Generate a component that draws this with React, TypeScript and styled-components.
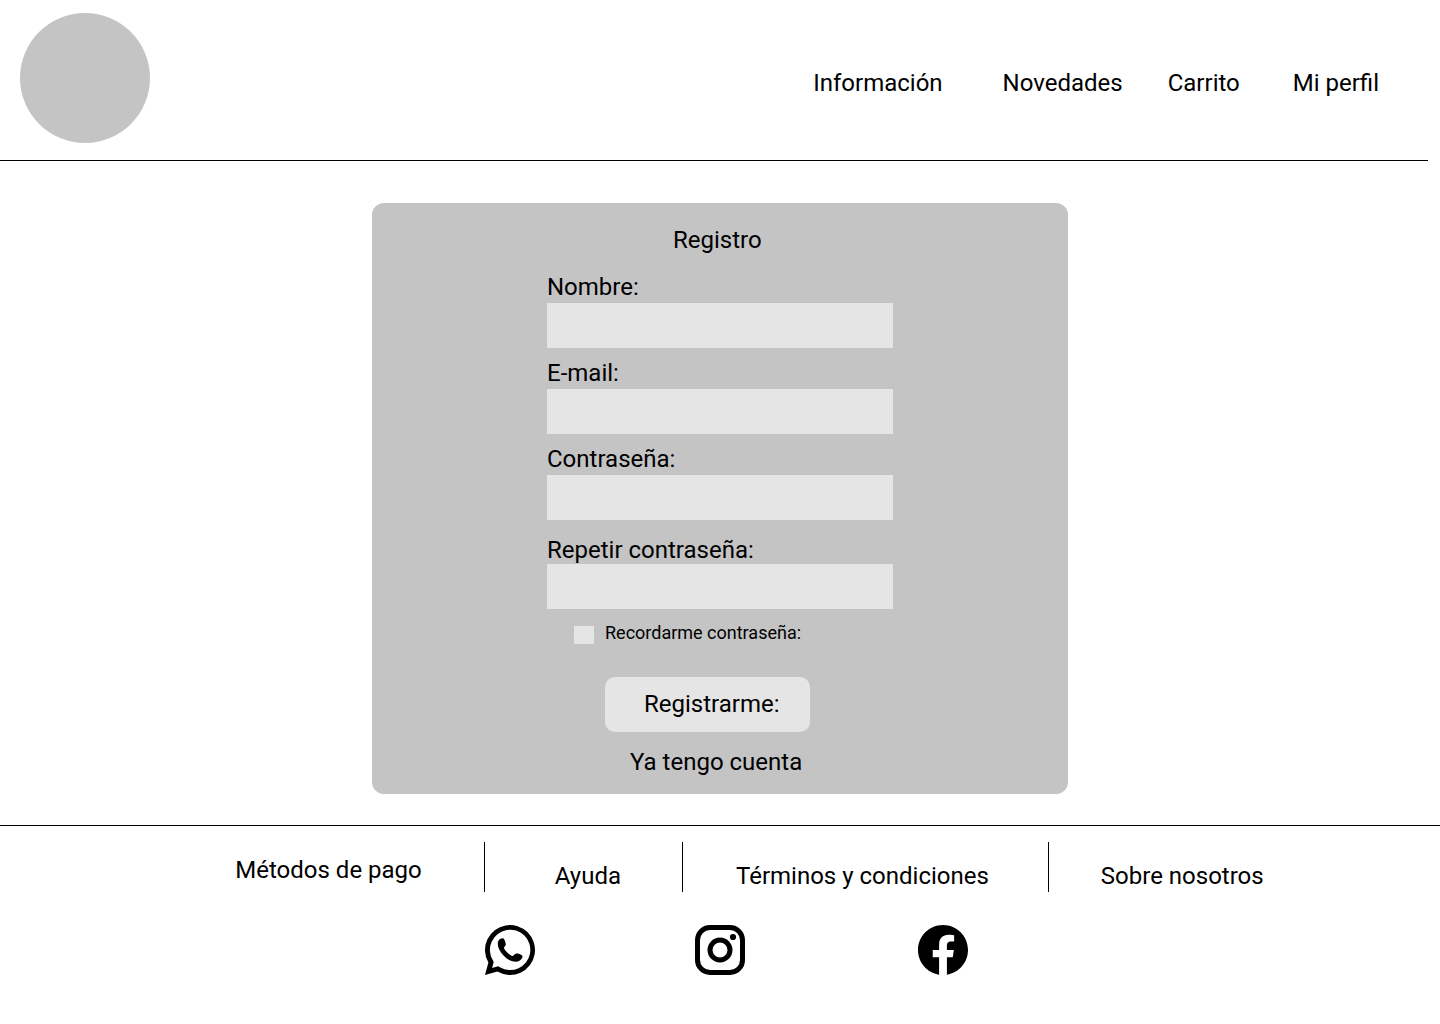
import React from 'react';
import styled, { createGlobalStyle } from 'styled-components';
import { RiFacebookCircleFill } from 'react-icons/ri';

const GlobalStyle = createGlobalStyle`
  *, *::before, *::after { box-sizing: border-box; }
  body {
    margin: 0;
    background: #ffffff;
    color: #000000;
    font-family: Roboto, "Liberation Sans", sans-serif;
    font-size: 24px;
    line-height: 28px;
  }
`;

const Header = styled.header`
  display: flex;
  align-items: center;
  justify-content: space-between;
  margin-right: 12px;
  padding: 13px 49px 17px 20px;
  border-bottom: 1px solid #000000;
`;

const Logo = styled.a`
  flex: none;
  width: 130px;
  height: 130px;
  border-radius: 50%;
  background: #c4c4c4;
`;

const Nav = styled.nav`
  display: flex;
  padding-top: 10px;
`;

const TextLink = styled.a`
  color: inherit;
  text-decoration: none;
  white-space: nowrap;
`;

const NavLink = styled(TextLink)<{ $before?: number }>`
  margin-left: ${({ $before = 0 }) => $before}px;
`;

const Main = styled.main`
  padding: 42px 24px 31px;
`;

const Card = styled.form`
  display: flex;
  flex-direction: column;
  align-items: center;
  max-width: 696px;
  margin: 0 auto;
  padding: 23px 24px 18px;
  border-radius: 12px;
  background: #c4c4c4;
`;

const Column = styled.div`
  display: flex;
  flex-direction: column;
  align-items: flex-start;
  width: 100%;
  max-width: 346px;
`;

const Title = styled.h1`
  margin: 0 0 8px;
  padding-left: 126px;
  font-size: 24px;
  font-weight: 400;
`;

const Field = styled.div<{ $tight?: boolean }>`
  display: flex;
  flex-direction: column;
  gap: ${({ $tight }) => ($tight ? 0 : 2)}px;
  width: 100%;
  margin-top: ${({ $tight }) => ($tight ? 16 : 11)}px;
`;

const TextInput = styled.input`
  width: 100%;
  height: 45px;
  padding: 0 12px;
  border: 0;
  border-radius: 0;
  background: #e5e5e5;
  font: inherit;
`;

const Remember = styled.div`
  display: flex;
  align-items: flex-end;
  gap: 11px;
  margin-top: 13px;
  padding-left: 27px;
  font-size: 18px;
  line-height: 22px;
`;

const Checkbox = styled.input`
  appearance: none;
  width: 20px;
  height: 18px;
  margin: 0;
  background: #e5e5e5;

  &:checked {
    background: #000000;
  }
`;

const Submit = styled.button`
  height: 55px;
  margin: 33px 0 16px 58px;
  padding: 0 30px 2px 39px;
  border: 0;
  border-radius: 10px;
  background: #e5e5e5;
  color: inherit;
  font: inherit;
  cursor: pointer;
`;

const AccountLink = styled(TextLink)`
  margin-left: 83px;
`;

const Footer = styled.footer`
  padding: 16px 0 44px;
  border-top: 1px solid #000000;
`;

const FooterNav = styled.nav`
  display: flex;
  justify-content: center;
  padding-left: 59px;
`;

const FooterCell = styled.div<{ $left?: number; $right?: number; $raised?: boolean }>`
  display: flex;
  align-items: ${({ $raised }) => ($raised ? 'center' : 'flex-end')};
  height: 50px;
  padding: 8px ${({ $right = 0 }) => $right}px 2px ${({ $left = 0 }) => $left}px;

  & + & {
    border-left: 1px solid #000000;
  }
`;

const Social = styled.div`
  display: flex;
  justify-content: center;
  margin-top: 28px;
  padding-left: 13px;
`;

const SocialLink = styled.a<{ $before?: number }>`
  display: flex;
  margin-left: ${({ $before = 0 }) => $before}px;
  color: inherit;
  font-size: 60px;
`;

const WhatsappIcon = () => (
  <svg width="60" height="60" viewBox="-5 -5 60 60" fill="currentColor" aria-hidden="true">
    <path
      fillRule="evenodd"
      d="M0 50 L3.4 37.6 A25 25 0 1 1 12.4 46.6 Z M7.1 42.9 L13.1 41.3 L14.9 42.3 A20.2 20.2 0 1 0 7.7 35.1 L8.7 36.9 Z"
    />
    <path d="M15 14 C12.2 16 12.2 20 14 24 C17 30 22 34.8 27.5 36.3 C32 37.5 36.4 36 37.5 32 C37.9 30 35.5 29.2 32.5 28.4 C30 27.8 29 31.6 27 31 C23.4 29.2 20.2 26 18.8 22.8 C19.8 21.2 21.4 20.2 20.6 18.2 C19.6 14.4 19 12 15 14 Z" />
  </svg>
);

const InstagramIcon = () => (
  <svg width="60" height="60" viewBox="-5 -5 60 60" fill="none" stroke="currentColor" strokeWidth="5" aria-hidden="true">
    <rect x="2.5" y="2.5" width="45" height="45" rx="12.5" />
    <circle cx="25" cy="25" r="10" />
    <circle cx="38" cy="12" r="3.1" fill="currentColor" stroke="none" />
  </svg>
);

const fields = [
  { id: 'nombre', label: 'Nombre:', type: 'text' },
  { id: 'email', label: 'E-mail:', type: 'email' },
  { id: 'clave', label: 'Contraseña:', type: 'password' },
  { id: 'clave2', label: 'Repetir contraseña:', type: 'password', tight: true },
];

export default function App() {
  return (
    <>
      <GlobalStyle />
      <Header>
        <Logo href="#" aria-label="Inicio" />
        <Nav>
          <NavLink href="#">Información</NavLink>
          <NavLink href="#" $before={60}>Novedades</NavLink>
          <NavLink href="#" $before={45}>Carrito</NavLink>
          <NavLink href="#" $before={53}>Mi perfil</NavLink>
        </Nav>
      </Header>
      <Main>
        <Card onSubmit={(e: React.FormEvent) => e.preventDefault()}>
          <Column>
            <Title>Registro</Title>
            {fields.map(({ id, label, type, tight }) => (
              <Field key={id} $tight={tight}>
                <label htmlFor={id}>{label}</label>
                <TextInput id={id} type={type} />
              </Field>
            ))}
            <Remember>
              <Checkbox id="recordar" type="checkbox" />
              <label htmlFor="recordar">Recordarme contraseña:</label>
            </Remember>
            <Submit type="submit">Registrarme:</Submit>
            <AccountLink href="#">Ya tengo cuenta</AccountLink>
          </Column>
        </Card>
      </Main>
      <Footer>
        <FooterNav>
          <FooterCell $right={62} $raised>
            <TextLink href="#">Métodos de pago</TextLink>
          </FooterCell>
          <FooterCell $left={70} $right={61}>
            <TextLink href="#">Ayuda</TextLink>
          </FooterCell>
          <FooterCell $left={53} $right={59}>
            <TextLink href="#">Términos y condiciones</TextLink>
          </FooterCell>
          <FooterCell $left={52}>
            <TextLink href="#">Sobre nosotros</TextLink>
          </FooterCell>
        </FooterNav>
        <Social>
          <SocialLink href="#" aria-label="WhatsApp"><WhatsappIcon /></SocialLink>
          <SocialLink href="#" aria-label="Instagram" $before={150}><InstagramIcon /></SocialLink>
          <SocialLink href="#" aria-label="Facebook" $before={163}><RiFacebookCircleFill /></SocialLink>
        </Social>
      </Footer>
    </>
  );
}
